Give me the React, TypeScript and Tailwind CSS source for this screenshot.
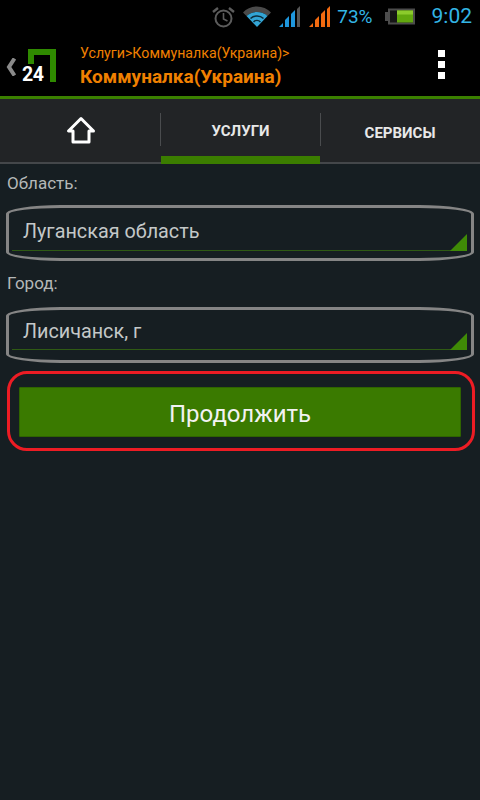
const font = { fontFamily: "Roboto, sans-serif" };

const Bars = ({ color, dim }: { color: string; dim: string }) => (
  <svg width="22" height="21" viewBox="0 0 22 21" className="block">
    <path d="M0 21l4-4v4z" fill={color} />
    <path d="M6 21v-7l4-4v11z" fill={color} />
    <path d="M12 21V8l4-4v17z" fill={color} />
    <path d="M18 21V3l3-3v21z" fill={dim} />
  </svg>
);

const StatusBar = () => (
  <div className="h-[33px] bg-black flex flex-row items-center justify-end">
    <svg width="23" height="22" viewBox="0 0 23 22" className="block mr-[8px]" fill="none" stroke="#5c5c5c">
      <circle cx="11.5" cy="12.5" r="8" strokeWidth="2" />
      <path d="M11.5 7v6l4 2" strokeWidth="1.6" />
      <path d="M1 6l5-4M22 6l-5-4" strokeWidth="2.4" />
    </svg>
    <svg width="28" height="21" viewBox="0 0 28 21" className="block mr-[8px]">
      <path d="M0 6.5C7-1.500 21-1.500 28 6.500L24.500 10C19 4.500 9 4.500 3.500 10z" fill="#4a4a4a" />
      <path d="M3.500 10C9 4.500 19 4.500 24.500 10L14 21z" fill="#33a5d5" />
      <path d="M7.500 12.500C11 9 17 9 20.500 12.500" stroke="#0d2c3a" strokeWidth="1.5" fill="none" />
      <path d="M10.500 16C12.500 14 15.500 14 17.500 16" stroke="#0d2c3a" strokeWidth="1.5" fill="none" />
    </svg>
    <div className="mr-[8px]">
      <Bars color="#1e96dc" dim="#555555" />
    </div>
    <div className="mr-[6px]">
      <Bars color="#f26a10" dim="#f26a10" />
    </div>
    <span className="text-[19px] leading-none text-[#33b5e5] mr-[12px]" style={font}>
      73%
    </span>
    <svg width="30" height="17" viewBox="0 0 30 17" className="block mr-[17px]">
      <rect x="3" y="0.500" width="27" height="16" fill="#4c4c4c" />
      <rect x="0" y="4" width="4" height="9" fill="#4c4c4c" />
      <rect x="5" y="2.500" width="23" height="12" fill="#161616" />
      <rect x="12" y="2.500" width="16" height="12" fill="#62a80e" />
      <rect x="12" y="2.500" width="16" height="4" fill="#8ccb2c" />
    </svg>
    <span className="text-[21px] leading-none text-[#33b5e5] mr-[8px]" style={font}>
      9:02
    </span>
  </div>
);

const Header = () => (
  <div className="h-[63px] bg-black flex flex-row items-center relative">
    <svg width="11" height="18" viewBox="0 0 11 18" className="block ml-[5px] mt-[4px]">
      <path d="M9.500 0.500L4 9l5.500 8.500" fill="none" stroke="#8a8a8a" strokeWidth="4" />
    </svg>
    <div className="relative ml-[7px] w-[33px] h-[33px] mr-[24px] mt-[2px]">
      <svg width="33" height="33" viewBox="0 0 33 33" className="block">
        <path d="M5 0h28v33h-6V6H11v9H5z" fill="#2f8a00" />
      </svg>
      <span
        className="absolute left-[-1px] bottom-[-4px] text-[19.5px] leading-[22px] font-bold text-white tracking-[-0.5px]"
        style={font}
      >
        24
      </span>
    </div>
    <div className="flex flex-col" style={font}>
      <span className="text-[14.2px] leading-[16px] text-[#f08000] mt-[3px]">Услуги&gt;Коммуналка(Украина)&gt;</span>
      <span className="text-[19px] leading-[22px] font-bold text-[#f08000] mt-[5px]">Коммуналка(Украина)</span>
    </div>
    <div className="ml-auto mr-[35px] flex flex-col gap-[4px]">
      <div className="w-[7px] h-[7px] bg-white" />
      <div className="w-[7px] h-[7px] bg-white" />
      <div className="w-[7px] h-[7px] bg-white" />
    </div>
  </div>
);

const Tabs = () => (
  <div className="h-[68px] bg-[#222426] border-t-[3px] border-[#3b8000] flex flex-row relative" style={font}>
    <div className="w-[161px] border-b-[2px] border-[#44474a] flex items-center justify-center">
      <svg width="30" height="28" viewBox="0 0 30 28" className="block mt-[-1px]">
        <path d="M15 2.500L2.500 15H7v11h16V15h4.500z" fill="none" stroke="#ffffff" strokeWidth="3" strokeLinejoin="round" />
      </svg>
    </div>
    <div className="w-[159px] border-b-[8px] border-[#3b7d00] flex items-center justify-center text-[15px] font-bold text-[#e8e8e8]">
      <span className="mt-[8px]">УСЛУГИ</span>
    </div>
    <div className="flex-1 border-b-[2px] border-[#44474a] flex items-center justify-center text-[15px] font-bold text-[#e8e8e8]">
      <span className="mt-[5px]">СЕРВИСЫ</span>
    </div>
    <div className="absolute left-[160px] top-[14px] w-px h-[33px] bg-[#4a4c4e]" />
    <div className="absolute left-[320px] top-[14px] w-px h-[33px] bg-[#4a4c4e]" />
  </div>
);

const Select = ({ value, second }: { value: string; second?: boolean }) => (
  <div className="mx-[6px] h-[56px] border-[3px] border-[#858585] rounded-[55px/9px] relative flex items-center">
    <span className={`ml-[14px] text-[19.8px] leading-[24px] text-[#c4c8c8] ${second ? "mt-[-6px]" : "mt-[-2px]"}`}>
      {value}
    </span>
    <div className={`absolute left-[3px] right-[4px] h-px bg-[#2f5a14] ${second ? "top-[39px]" : "top-[42px]"}`} />
    <svg
      width="17"
      height="17"
      viewBox="0 0 17 17"
      className={`absolute right-[4px] block ${second ? "top-[23px]" : "top-[26px]"}`}
    >
      <path d="M0 17L17 0v17z" fill="#3f8a06" />
    </svg>
  </div>
);

export default function App() {
  return (
    <div className="w-[480px] h-[800px] bg-[#161e22] flex flex-col overflow-hidden">
      <StatusBar />
      <Header />
      <Tabs />
      <div className="flex flex-col" style={font}>
        <div className="ml-[7px] mt-[8px] mb-[11px] text-[17px] leading-[22px] text-[#b4b8b8]">Область:</div>
        <Select value="Луганская область" />
        <div className="ml-[7px] mt-[11px] mb-[13px] text-[17px] leading-[22px] text-[#b4b8b8]">Город:</div>
        <Select value="Лисичанск, г" second />
        <div className="ml-[7px] w-[468px] mt-[8px] h-[80px] border-[3px] border-[#ed1c24] rounded-[20px] flex items-center pl-[9px]">
          <div className="w-[442px] h-[50px] mt-[2px] bg-[#3a7a00] border border-[#2f6400] rounded-[1px] flex items-center justify-center text-[24px] text-[#f2f2f2]">
            <span className="mt-[3px]">Продолжить</span>
          </div>
        </div>
      </div>
    </div>
  );
}
